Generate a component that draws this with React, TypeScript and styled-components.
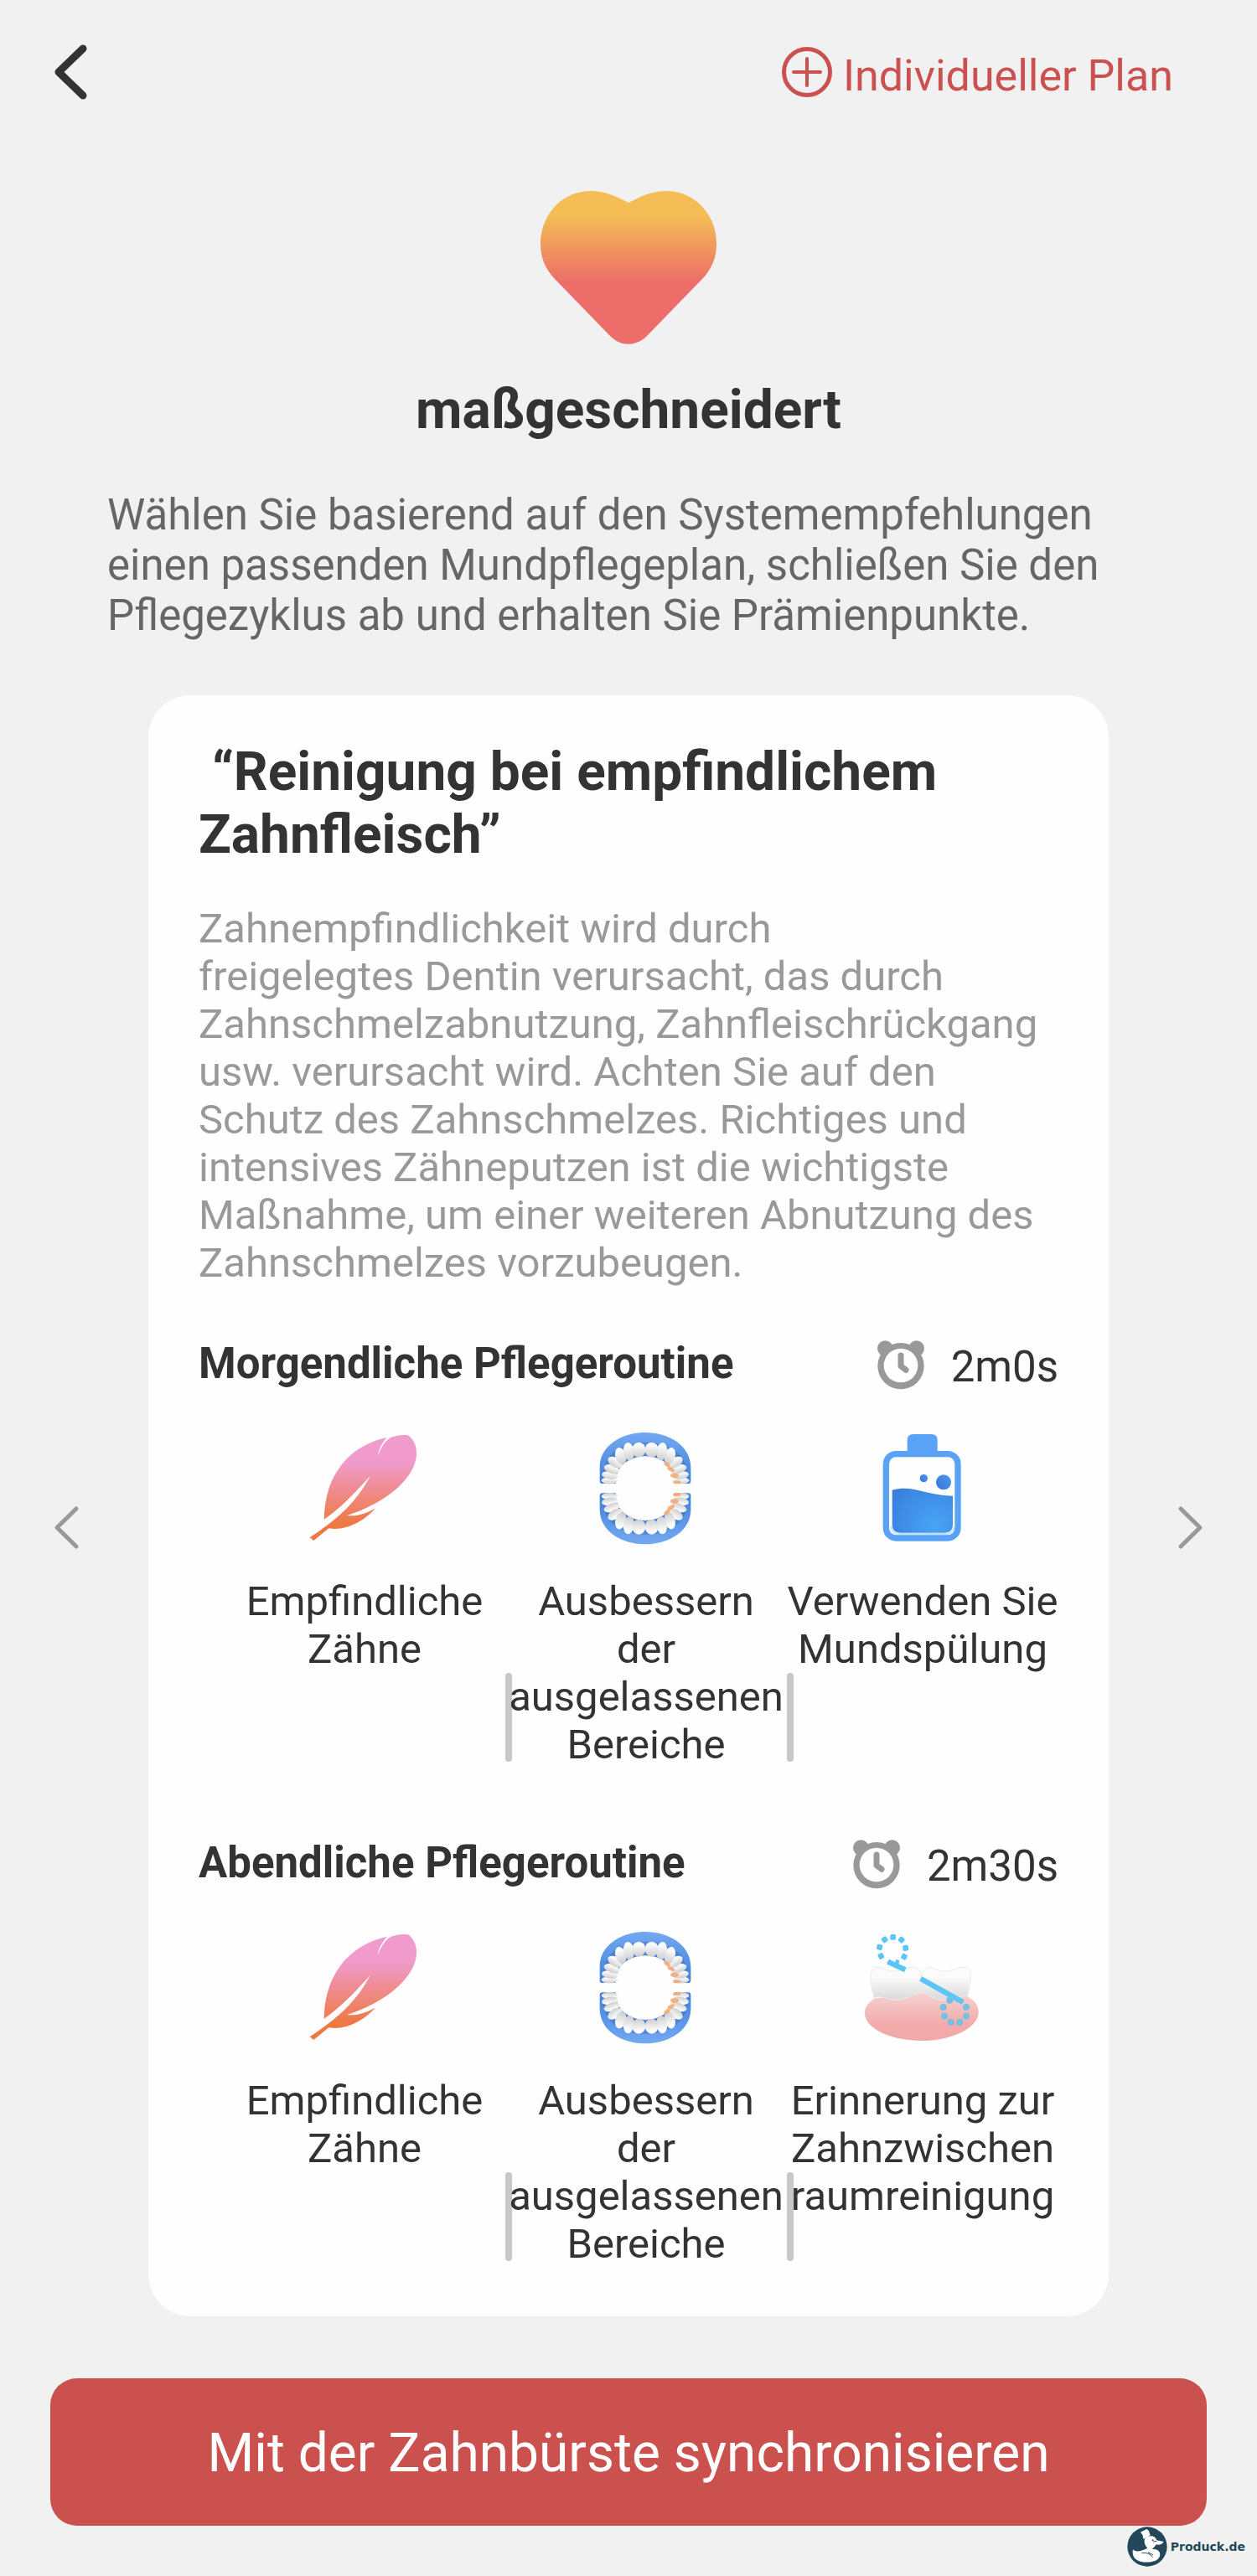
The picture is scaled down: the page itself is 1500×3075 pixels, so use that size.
import React from 'react';
import styled, { createGlobalStyle } from 'styled-components';

const GlobalStyle = createGlobalStyle`
  *, *::before, *::after { box-sizing: border-box; }
  body {
    margin: 0;
    background: #f1f1f1;
    color: #333;
    font-family: Roboto, "Noto Sans", sans-serif;
  }
  button { font: inherit; color: inherit; border: 0; padding: 0; background: none; cursor: pointer; }
  h1, h2, h3, p, ul { margin: 0; padding: 0; }
  svg { display: block; flex: none; }
`;

const Page = styled.div`
  display: flex;
  flex-direction: column;
`;

const TopBar = styled.header`
  display: flex;
  align-items: center;
  justify-content: space-between;
  padding: 51px 100px 0 64px;
`;

const BackButton = styled.button`
  display: flex;
`;

const PlanButton = styled.button`
  display: flex;
  align-items: center;
  gap: 12px;
  color: #cb5150;
  font-size: 52px;
  line-height: 60px;
`;

const PlanLabel = styled.span`
  padding-top: 10px;
`;

const Intro = styled.section`
  display: flex;
  flex-direction: column;
  align-items: center;
  padding: 106px 128px 0;
`;

const IntroTitle = styled.h1`
  margin-top: 40px;
  font-size: 64px;
  line-height: 75px;
  font-weight: 700;
`;

const IntroText = styled.p`
  align-self: stretch;
  margin-top: 58px;
  color: #666;
  font-size: 51px;
  line-height: 60px;
`;

const Carousel = styled.section`
  display: grid;
  grid-template-columns: 177px minmax(0, 1fr) 177px;
  margin-top: 65px;
`;

const NavButton = styled.button<{ $end?: boolean }>`
  display: flex;
  align-items: center;
  justify-content: ${(p) => (p.$end ? 'flex-end' : 'flex-start')};
  padding: 52px 62px 0;
`;

const Card = styled.article`
  padding: 54px 60px 58px;
  border-radius: 50px;
  background: #fefefe;
`;

const CardTitle = styled.h2`
  font-size: 64px;
  line-height: 75px;
  font-weight: 700;
  white-space: pre-wrap;
`;

const CardText = styled.p`
  margin-top: 46px;
  color: #999;
  font-size: 49px;
  line-height: 57px;
`;

const Routine = styled.section`
  margin-top: 62px;

  & + & {
    margin-top: 83px;
  }
`;

const RoutineHead = styled.div`
  display: flex;
  justify-content: space-between;
  height: 93px;
`;

const RoutineTitle = styled.h3`
  font-size: 51px;
  line-height: 60px;
  font-weight: 700;
`;

const Duration = styled.div`
  display: flex;
  align-items: flex-start;
  gap: 32px;
  padding-top: 2px;
  font-size: 51px;
  line-height: 60px;
`;

const DurationText = styled.span`
  padding-top: 2px;
`;

const Steps = styled.ul`
  display: grid;
  grid-template-columns: 336fr 336fr 324fr;
  margin-left: 30px;
  list-style: none;
`;

const Step = styled.li`
  position: relative;
  display: flex;
  flex-direction: column;
  align-items: center;
  gap: 22px;
  text-align: center;

  & + &::before {
    content: '';
    position: absolute;
    left: 0;
    bottom: 8px;
    width: 8px;
    height: 106px;
    border-radius: 4px;
    background: #c8c8c8;
  }
`;

const StepLabel = styled.span`
  position: relative;
  font-size: 49px;
  line-height: 57px;
  white-space: pre-line;
`;

const SyncButton = styled.button`
  margin: 74px 60px 0;
  padding: 52px 0 49px;
  border-radius: 32px;
  background: #cb514f;
  color: #fff;
  font-size: 64px;
  line-height: 75px;
`;

const Watermark = styled.footer`
  display: flex;
  align-items: center;
  justify-content: flex-end;
  gap: 4px;
  padding: 1px 14px 12px;
  color: #24475a;
  font: bold 14px/20px "DejaVu Sans", sans-serif;
`;

const Chevron = ({ size, stroke, color, flip }: { size: [number, number]; stroke: number; color: string; flip?: boolean }) => {
  const [w, h] = size;
  const s = 6;
  const points = flip
    ? `${s},${s} ${w - s},${h / 2} ${s},${h - s}`
    : `${w - s},${s} ${s},${h / 2} ${w - s},${h - s}`;
  return (
    <svg width={w} height={h} fill="none" stroke={color} strokeWidth={stroke} strokeLinecap="round" strokeLinejoin="round" aria-hidden="true">
      <polyline points={points} />
    </svg>
  );
};

const PlusCircle = () => (
  <svg width="62" height="62" viewBox="0 0 62 62" fill="none" stroke="#cb5150" aria-hidden="true">
    <circle cx="31" cy="31" r="27.5" strokeWidth="5" />
    <path d="M31 15v32M15 31h32" strokeWidth="4" strokeLinecap="round" />
  </svg>
);

const Heart = () => (
  <svg width="212" height="185" viewBox="0 0 212 185" aria-hidden="true">
    <defs>
      <linearGradient id="heart" x1="0" y1="0" x2="0" y2="1">
        <stop offset=".16" stopColor="#f4bd55" />
        <stop offset=".6" stopColor="#ec6d69" />
      </linearGradient>
    </defs>
    <path fill="url(#heart)" d="M106 15C121 7 135 1 151 1C186 1 211 30 211 64C211 81 205 95 193 107L128 174C115 187 97 187 84 174L19 107C7 95 1 81 1 64C1 30 26 1 61 1C77 1 91 7 106 15Z" />
  </svg>
);

const Clock = () => (
  <svg width="56" height="60" viewBox="0 0 168 180" aria-hidden="true">
    <g fill="#999">
      <circle cx="28" cy="29" r="28" />
      <circle cx="140" cy="29" r="28" />
      <circle cx="84" cy="92" r="83" />
    </g>
    <circle cx="84" cy="90" r="61" fill="#fefefe" />
    <path d="M84 54v38l18 14" fill="none" stroke="#999" strokeWidth="21" strokeLinecap="round" strokeLinejoin="round" />
  </svg>
);

const Feather = () => (
  <svg width="160" height="170" viewBox="45 0 480 510" aria-hidden="true">
    <defs>
      <linearGradient id="feather" gradientUnits="userSpaceOnUse" x1="0" y1="66" x2="0" y2="440">
        <stop offset=".27" stopColor="#f09bcb" />
        <stop offset=".86" stopColor="#ee7840" />
      </linearGradient>
    </defs>
    <path fill="url(#feather)" d="M140 368C142 220 220 106 366 74C346 95 335 119 332 142C343 112 360 83 384 73C403 66 424 64 441 67C465 84 475 116 470 146C458 228 355 312 222 354C260 359 293 344 324 329C283 373 221 410 157 400L103 444L89 433C197 362 258 302 305 213C246 279 196 330 140 368Z" />
  </svg>
);

const JAW_TEETH = [
  [112, 229, 29, 12, 0],
  [113, 210, 29, 14, 8],
  [120, 188, 29, 15, 18],
  [132, 164, 29, 17, 32],
  [152, 141, 19, 31, -16],
  [181, 125, 19, 32, -8],
  [217, 119, 24, 27, 0],
];

const TeethHalf = () => (
  <>
    <path fill="url(#jaw)" d="M77 230V182C77 102 158 57 240 57C322 57 403 102 403 182V230Q403 240 393 240H340L240 140L140 240H87Q77 240 77 230Z" />
    <path fill="#2f66b5" opacity=".4" d="M90 222C84 130 160 92 240 92C320 92 396 130 390 222Z" />
    <path fill="#fefefe" d="M134 244C130 180 180 142 240 142C300 142 350 180 346 244Z" />
    {[false, true].map((mirrored) => (
      <g key={String(mirrored)} transform={mirrored ? 'matrix(-1 0 0 1 480 0)' : undefined}>
        {JAW_TEETH.map(([x, y, rx, ry, a]) => (
          <ellipse key={`${x}-${y}`} cx={x} cy={y} rx={rx} ry={ry} transform={`rotate(${a} ${x} ${y})`} fill="url(#tooth)" />
        ))}
      </g>
    ))}
    <g fill="#f6a76c" opacity=".85">
      <ellipse cx="318" cy="172" rx="13" ry="7" transform="rotate(40 318 172)" />
      <ellipse cx="332" cy="189" rx="14" ry="7" transform="rotate(25 332 189)" />
      <ellipse cx="345" cy="211" rx="15" ry="8" />
      <ellipse cx="353" cy="235" rx="14" ry="6" />
    </g>
  </>
);

const Teeth = () => (
  <svg width="160" height="170" viewBox="3 0 480 510" aria-hidden="true">
    <defs>
      <linearGradient id="jaw" x1="0" y1="0" x2="0" y2="1">
        <stop offset="0" stopColor="#74a9f2" />
        <stop offset="1" stopColor="#3f7fd8" />
      </linearGradient>
      <linearGradient id="tooth" x1="0" y1="0" x2="0" y2="1">
        <stop offset=".2" stopColor="#fbfbfb" />
        <stop offset="1" stopColor="#cdcdcd" />
      </linearGradient>
    </defs>
    <TeethHalf />
    <g transform="matrix(1 0 0 -1 0 514)">
      <TeethHalf />
    </g>
  </svg>
);

const Bottle = () => (
  <svg width="160" height="170" viewBox="3 330 480 510" aria-hidden="true">
    <defs>
      <radialGradient id="liquid" gradientUnits="userSpaceOnUse" cx="285" cy="715" r="180">
        <stop offset="0" stopColor="#47a5f5" />
        <stop offset="1" stopColor="#3a7edd" />
      </radialGradient>
      <linearGradient id="bubble" x1="1" y1="0" x2="0" y2="1">
        <stop offset="0" stopColor="#4d9af0" />
        <stop offset="1" stopColor="#3573d5" />
      </linearGradient>
    </defs>
    <path fill="#5aa2f6" d="M188 460V414Q188 393 209 393H274Q296 393 296 414V460Z" />
    <rect x="112" y="464" width="257" height="301" rx="36" fill="#fefefe" stroke="#5aa2f6" strokeWidth="22" />
    <path fill="url(#liquid)" d="M134 593C210 573 238 609 351 614V718Q351 746 323 746H162Q134 746 134 718Z" />
    <path fill="none" stroke="#bfe4fb" strokeWidth="6" d="M129 722Q131 750 160 750H325Q354 750 356 722" />
    <circle cx="247" cy="551" r="14" fill="url(#bubble)" />
    <circle cx="318" cy="565" r="27" fill="url(#bubble)" />
  </svg>
);

const TOP_RING = [[257, 394], [287, 404], [302, 433], [297, 464], [214, 462], [209, 430], [227, 403]];
const BOTTOM_RING = [[437, 645], [441, 677], [464, 699], [496, 699], [519, 677], [519, 645], [460, 620]];

const Floss = () => (
  <svg width="160" height="170" viewBox="123 318 480 510" aria-hidden="true">
    <defs>
      <linearGradient id="gum" x1="0" y1="0" x2="0" y2="1">
        <stop offset=".1" stopColor="#f6cdcd" />
        <stop offset=".7" stopColor="#f1a9a9" />
      </linearGradient>
      <linearGradient id="molar" x1="0" y1="0" x2="0" y2="1">
        <stop offset=".3" stopColor="#fbfbfb" />
        <stop offset="1" stopColor="#d9d9d9" />
      </linearGradient>
    </defs>
    <path fill="url(#gum)" d="M190 614C300 596 330 580 400 596C440 606 500 596 524 606C550 622 563 640 563 662C563 720 466 765 360 765C252 765 156 723 156 666C156 644 169 628 190 614Z" />
    <g fill="url(#molar)" stroke="#ebebeb" strokeWidth="3">
      <path d="M189 612C180 580 174 545 178 520C184 500 204 498 222 506C250 520 282 520 310 504C334 496 350 504 354 524C358 550 354 575 356 594C325 600 310 618 268 619C235 620 215 600 189 612Z" />
      <path d="M360 594C360 570 356 545 361 522C368 500 388 498 406 508C432 520 458 518 486 506C508 496 530 502 535 522C539 545 530 578 523 606C500 600 470 619 436 619C400 619 386 596 360 594Z" />
    </g>
    <g stroke="#5bc5f5" strokeWidth="19" fill="none">
      <path d="M238 482L301 511" />
      <path d="M356 543L508 628" />
      <path d="M274 476L268 498" strokeWidth="14" />
    </g>
    <g fill="#5bc5f5">
      {TOP_RING.map(([x, y]) => (
        <rect key={`${x}-${y}`} x={x - 10} y={y - 10} width="20" height="20" rx="5" transform={`rotate(${(Math.atan2(y - 440, x - 256) * 180) / Math.PI} ${x} ${y})`} />
      ))}
    </g>
    <g fill="#75bfe0">
      {BOTTOM_RING.map(([x, y]) => (
        <circle key={`${x}-${y}`} cx={x} cy={y} r="12" />
      ))}
    </g>
  </svg>
);

const DuckLogo = () => (
  <svg width="48" height="48" viewBox="73 47 144 144" aria-hidden="true">
    <circle cx="145" cy="119" r="71" fill="#24475a" />
    <g fill="#fff">
      <path d="M121 67L143 56L150 61L156 78L132 92L128 76Z" />
      <path d="M136 92C145 76 174 76 179 96L204 101C199 110 190 114 177 111C172 121 166 123 163 127C185 128 195 138 189 155C182 177 126 182 103 163C94 155 91 141 94 129C105 141 124 134 146 124C138 116 132 105 136 92Z" />
    </g>
    <g fill="none" stroke="#24475a" strokeWidth="3">
      <path d="M125 142C143 139 157 145 164 157M148 139L166 149" />
      <path d="M167 101L179 99" />
    </g>
    <circle cx="165" cy="96" r="3" fill="#24475a" />
  </svg>
);

type StepData = { icon: React.ReactNode; label: string };
type RoutineData = { title: string; duration: string; steps: StepData[] };

const description =
  'Zahnempfindlichkeit wird durch freigelegtes\u00a0Dentin verursacht, das durch Zahnschmelzabnutzung, ' +
  'Zahnfleischrückgang usw. verursacht wird. Achten Sie auf den Schutz des Zahnschmelzes. Richtiges und ' +
  'intensives Zähneputzen ist die wichtigste Maßnahme, um einer weiteren Abnutzung des Zahnschmelzes vorzubeugen.';

const sharedSteps: StepData[] = [
  { icon: <Feather />, label: 'Empfindliche\nZähne' },
  { icon: <Teeth />, label: 'Ausbessern\nder\nausgelassenen\nBereiche' },
];

const routines: RoutineData[] = [
  {
    title: 'Morgendliche Pflegeroutine',
    duration: '2m0s',
    steps: [...sharedSteps, { icon: <Bottle />, label: 'Verwenden Sie\nMundspülung' }],
  },
  {
    title: 'Abendliche Pflegeroutine',
    duration: '2m30s',
    steps: [...sharedSteps, { icon: <Floss />, label: 'Erinnerung zur\nZahnzwischen\nraumreinigung' }],
  },
];

export default function App() {
  return (
    <Page>
      <GlobalStyle />
      <TopBar>
        <BackButton type="button" aria-label="Zurück">
          <Chevron size={[41, 68]} stroke={9} color="#333" />
        </BackButton>
        <PlanButton type="button">
          <PlusCircle />
          <PlanLabel>Individueller Plan</PlanLabel>
        </PlanButton>
      </TopBar>

      <Intro>
        <Heart />
        <IntroTitle>maßgeschneidert</IntroTitle>
        <IntroText>
          Wählen Sie basierend auf den Systemempfehlungen einen passenden Mundpflegeplan, schließen Sie den
          Pflegezyklus ab und erhalten Sie Prämienpunkte.
        </IntroText>
      </Intro>

      <Carousel>
        <NavButton type="button" aria-label="Vorheriger Plan">
          <Chevron size={[35, 57]} stroke={5} color="#999" />
        </NavButton>
        <Card>
          <CardTitle>{' “Reinigung bei empfindlichem Zahnfleisch”'}</CardTitle>
          <CardText>{description}</CardText>
          {routines.map((routine) => (
            <Routine key={routine.title}>
              <RoutineHead>
                <RoutineTitle>{routine.title}</RoutineTitle>
                <Duration>
                  <Clock />
                  <DurationText>{routine.duration}</DurationText>
                </Duration>
              </RoutineHead>
              <Steps>
                {routine.steps.map((step, i) => (
                  <Step key={i}>
                    {step.icon}
                    <StepLabel>{step.label}</StepLabel>
                  </Step>
                ))}
              </Steps>
            </Routine>
          ))}
        </Card>
        <NavButton type="button" aria-label="Nächster Plan" $end>
          <Chevron size={[35, 57]} stroke={5} color="#999" flip />
        </NavButton>
      </Carousel>

      <SyncButton type="button">Mit der Zahnbürste synchronisieren</SyncButton>

      <Watermark>
        <DuckLogo />
        Produck.de
      </Watermark>
    </Page>
  );
}
